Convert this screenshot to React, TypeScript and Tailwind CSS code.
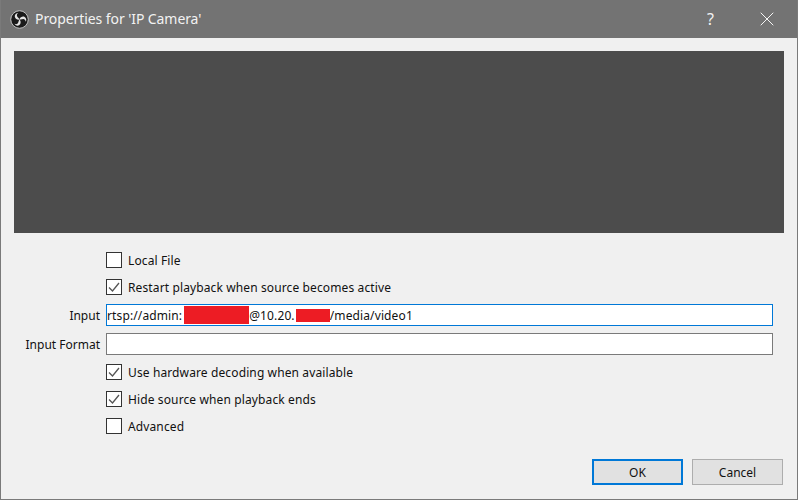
import { X } from 'lucide-react';

// OBS mark: dark disc with three white comma swirls
function ObsLogo() {
  const swirl = 'M19 19.5C13.5 20 9.5 16.5 9.5 12.5C9.5 8.5 13 5.8 16.5 6C14.5 7.5 13.2 9.5 14 11.8C15 14.6 18 15.5 19 19.5Z';
  return (
    <svg width="19" height="19" viewBox="0 0 38 38" className="shrink-0">
      <circle cx="19" cy="19" r="17.5" fill="#1a1a1a" stroke="#dddddd" strokeWidth="1.6" />
      <path d={swirl} fill="#e4e4e4" />
      <path d={swirl} fill="#e4e4e4" transform="rotate(120 19 19)" />
      <path d={swirl} fill="#e4e4e4" transform="rotate(240 19 19)" />
    </svg>
  );
}

function CheckRow({ label, checked, className }: { label: string; checked?: boolean; className: string }) {
  return (
    <div className={`col-start-2 flex items-center gap-[6px] h-4 ${className}`}>
      <span className="w-4 h-4 border border-[#333333] bg-white flex items-center justify-center shrink-0">
        {checked && (
          <svg width="14" height="14" viewBox="0 0 14 14" fill="none">
            <path d="M2 7.5L5.5 11L12 3" stroke="#555555" strokeWidth="1.3" />
          </svg>
        )}
      </span>
      <span className="text-[12px] leading-4 text-[#111111] tracking-[0.12px] mt-[2px]">{label}</span>
    </div>
  );
}

export default function App() {
  return (
    <div className="w-[798px] h-[500px] flex flex-col bg-[#f0f0f0] border-x border-b border-[#7a7a7a] overflow-hidden font-['Noto_Sans','Open_Sans',sans-serif]">
      {/* Title bar */}
      <div className="h-[38px] shrink-0 bg-[#737373] flex items-center pl-[10px] gap-[6px] text-white -mx-px">
        <ObsLogo />
        <span className="text-[14px] leading-none tracking-[-0.08px] text-[#f2f2f2] whitespace-nowrap">Properties for 'IP Camera'</span>
        <span className="ml-auto text-[16px] leading-none text-[#f2f2f2] mr-[35px]">?</span>
        <X size={24} strokeWidth={1} className="mr-[19px] text-[#f5f5f5]" />
      </div>

      {/* Preview */}
      <div className="h-[182px] shrink-0 mt-[13px] ml-[13px] mr-[13px] bg-[#4c4c4c]" />

      {/* Form */}
      <div className="grid grid-cols-[86px_667px] ml-[13px] mt-[19px] gap-x-[6px] items-center">
        <CheckRow label="Local File" className="" />
        <CheckRow label="Restart playback when source becomes active" checked className="mt-[11px]" />

        <label className="h-[22px] text-[12px] text-right text-[#111111] mt-[9px] leading-[24px]">Input</label>
        <div className="h-[22px] mt-[9px] border border-[#0078d7] bg-white flex items-center text-[12px] text-[#111111] whitespace-nowrap tracking-[0.12px]">
          <span className="mt-[2px]">rtsp://admin:</span>
          <span className="inline-block w-[65px] h-[18px] ml-[2px] bg-[#ed1c24]" />
          <span className="mt-[2px]">@10.20.</span>
          <span className="inline-block w-[34px] h-[13px] ml-px bg-[#ed1c24]" />
          <span className="mt-[2px]">/media/video1</span>
        </div>

        <label className="h-[22px] text-[12px] text-right text-[#111111] mt-[7px] leading-[24px] whitespace-nowrap">Input Format</label>
        <div className="h-[22px] mt-[7px] border border-[#7a7a7a] bg-white" />

        <CheckRow label="Use hardware decoding when available" checked className="mt-[9px]" />
        <CheckRow label="Hide source when playback ends" checked className="mt-[11px]" />
        <CheckRow label="Advanced" className="mt-[11px]" />
      </div>

      {/* Buttons */}
      <div className="mt-[25px] mr-[14px] flex justify-end gap-[9px]">
        <button className="w-[91px] h-[26px] border-2 border-[#0078d7] bg-[#e1e1e1] text-[12px] text-[#111111] pt-px">OK</button>
        <button className="w-[91px] h-[26px] border border-[#adadad] bg-[#e1e1e1] text-[12px] text-[#111111] pt-px">Cancel</button>
      </div>
    </div>
  );
}
